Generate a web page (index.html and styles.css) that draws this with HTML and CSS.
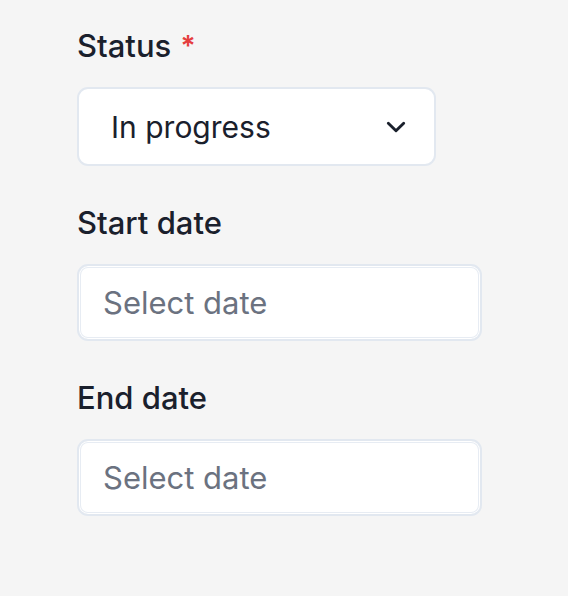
FILE: index.html
```html
<!DOCTYPE html>
<html>

<head>
  <title>Task dates</title>
  <link rel="stylesheet" href="styles.css">
</head>

<body class="main">
  <form class="fields">
    <div class="field">
      <label class="lbl">Status <span class="req">*</span></label>
      <div class="select">
        <span>In progress</span>
        <svg class="chev" width="22" height="22" viewBox="0 0 20 20">
          <path d="M3 6.5l7 7 7-7" fill="none" stroke="#1a202c" stroke-width="2.6" stroke-linecap="round" stroke-linejoin="round"/>
        </svg>
      </div>
    </div>

    <div class="field">
      <label class="lbl">Start date</label>
      <input class="date" type="text" placeholder="Select date">
    </div>

    <div class="field">
      <label class="lbl">End date</label>
      <input class="date" type="text" placeholder="Select date">
    </div>
  </form>
</body>

</html>
```

FILE: styles.css
```css
.main {
  margin: 0;
  background: #f5f5f5;
  font-family: Inter, "Noto Sans", sans-serif;
  color: #1a202c;
}

.fields {
  display: flex;
  flex-direction: column;
  gap: 38px;
  padding: 27px 0 0 77px;
}

.field {
  display: flex;
  flex-direction: column;
  gap: 22px;
}

.lbl {
  font-size: 31px;
  line-height: 38px;
  font-weight: 500;
}

.req {
  color: #e53e3e;
  font-size: 28px;
  font-weight: 600;
  vertical-align: top;
  margin-left: 1px;
}

.select {
  display: flex;
  align-items: center;
  justify-content: space-between;
  box-sizing: border-box;
  width: 359px;
  height: 79px;
  padding: 0 27px 0 32px;
  background: #fff;
  border: 2px solid #e2e8f0;
  border-radius: 11px;
  font-size: 30px;
}

.date {
  box-sizing: border-box;
  width: 405px;
  height: 77px;
  padding: 0 24px;
  background: #fff;
  border: 2px solid #e2e8f0;
  box-shadow: inset 0 0 0 1px #fff, inset 0 0 0 2px #e7ecf3;
  border-radius: 11px;
  font-family: Inter, "Noto Sans", sans-serif;
  font-size: 31px;
  color: #1a202c;
  outline: none;
}

.date::placeholder {
  color: #6b7280;
}
```
